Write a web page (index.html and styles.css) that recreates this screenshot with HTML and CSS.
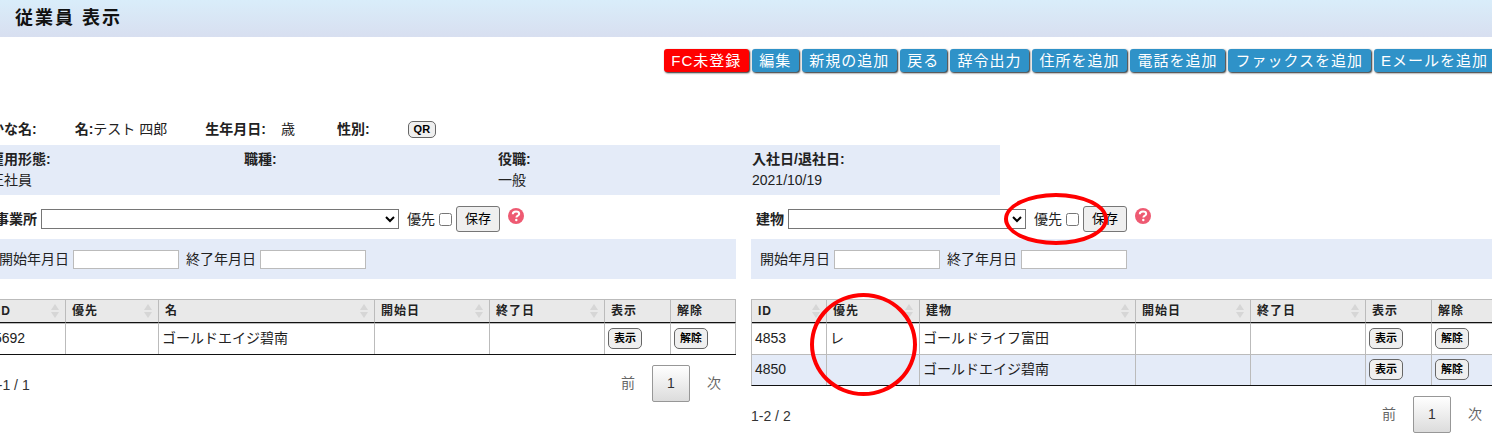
FILE: index.html
```html
<!DOCTYPE html>
<html lang="ja">
<head>
  <meta charset="UTF-8">
  <meta name="viewport" content="width=device-width, initial-scale=1.0">
  <title>従業員 表示</title>
  <link rel="stylesheet" href="styles.css">
</head>
<body>
  <header class="page-title">
    <h1>従業員 表示</h1>
  </header>

  <main class="content">
    <div class="toolbar">
      <button type="button" class="tool alert">FC未登録</button>
      <button type="button" class="tool">編集</button>
      <button type="button" class="tool">新規の追加</button>
      <button type="button" class="tool">戻る</button>
      <button type="button" class="tool">辞令出力</button>
      <button type="button" class="tool">住所を追加</button>
      <button type="button" class="tool">電話を追加</button>
      <button type="button" class="tool">ファックスを追加</button>
      <button type="button" class="tool">Eメールを追加</button>
    </div>

    <div class="person">
      <div><b>かな名:</b></div>
      <div><b>名:</b>テスト 四郎</div>
      <div class="birth"><b>生年月日:</b><span>歳</span></div>
      <div class="sex"><b>性別:</b></div>
      <button type="button" class="small">QR</button>
    </div>

    <div class="job">
      <div><b>雇用形態:</b><br>正社員</div>
      <div><b>職種:</b></div>
      <div><b>役職:</b><br>一般</div>
      <div><b>入社日/退社日:</b><br>2021/10/19</div>
    </div>

    <div class="panels">
      <section class="panel">
        <div class="assign">
          <label for="office"><b>事業所</b></label>
          <select id="office" class="select-office"><option></option></select>
          <label class="priority" for="office-priority">優先</label>
          <input type="checkbox" id="office-priority">
          <button type="button" class="save">保存</button>
          <svg class="help" viewBox="0 0 16 16"><circle cx="8" cy="8" r="8" fill="#ee5a72"/><path d="M4.8 6.2C4.8 4.4 6.2 3.5 8 3.5s3.2.9 3.2 2.4c0 1.7-2.8 1.8-2.8 3.6" fill="none" stroke="#fff" stroke-width="2"/><circle cx="8.3" cy="12" r="1.2" fill="#fff"/></svg>
        </div>
        <div class="dates">
          <label for="office-start">開始年月日</label>
          <input type="text" id="office-start">
          <label class="end" for="office-end">終了年月日</label>
          <input type="text" id="office-end">
        </div>
        <table class="list">
          <colgroup><col class="c-id"><col class="c-pri"><col><col class="c-date"><col class="c-date"><col class="c-btn"><col class="c-last"></colgroup>
          <thead>
            <tr><th class="sort">ID</th><th class="sort">優先</th><th class="sort">名</th><th class="sort">開始日</th><th class="sort">終了日</th><th>表示</th><th>解除</th></tr>
          </thead>
          <tbody>
            <tr><td>5692</td><td></td><td>ゴールドエイジ碧南</td><td></td><td></td><td><button type="button" class="small">表示</button></td><td><button type="button" class="small">解除</button></td></tr>
          </tbody>
        </table>
        <div class="list-footer">
          <div class="count">1-1 / 1</div>
          <div class="pager">
            <button type="button">前</button>
            <button type="button" class="current">1</button>
            <button type="button">次</button>
          </div>
        </div>
      </section>

      <section class="panel">
        <div class="assign">
          <label for="building"><b>建物</b></label>
          <select id="building" class="select-building"><option></option></select>
          <label class="priority" for="building-priority">優先</label>
          <input type="checkbox" id="building-priority">
          <button type="button" class="save">保存</button>
          <svg class="help" viewBox="0 0 16 16"><circle cx="8" cy="8" r="8" fill="#ee5a72"/><path d="M4.8 6.2C4.8 4.4 6.2 3.5 8 3.5s3.2.9 3.2 2.4c0 1.7-2.8 1.8-2.8 3.6" fill="none" stroke="#fff" stroke-width="2"/><circle cx="8.3" cy="12" r="1.2" fill="#fff"/></svg>
        </div>
        <div class="dates">
          <label for="building-start">開始年月日</label>
          <input type="text" id="building-start">
          <label class="end" for="building-end">終了年月日</label>
          <input type="text" id="building-end">
        </div>
        <table class="list">
          <colgroup><col class="c-id"><col class="c-pri"><col><col class="c-date"><col class="c-date"><col class="c-btn"><col class="c-last"></colgroup>
          <thead>
            <tr><th class="sort">ID</th><th class="sort">優先</th><th class="sort">建物</th><th class="sort">開始日</th><th class="sort">終了日</th><th>表示</th><th>解除</th></tr>
          </thead>
          <tbody>
            <tr><td>4853</td><td>レ</td><td>ゴールドライフ富田</td><td></td><td></td><td><button type="button" class="small">表示</button></td><td><button type="button" class="small">解除</button></td></tr>
            <tr><td>4850</td><td></td><td>ゴールドエイジ碧南</td><td></td><td></td><td><button type="button" class="small">表示</button></td><td><button type="button" class="small">解除</button></td></tr>
          </tbody>
        </table>
        <div class="list-footer">
          <div class="count">1-2 / 2</div>
          <div class="pager">
            <button type="button">前</button>
            <button type="button" class="current">1</button>
            <button type="button">次</button>
          </div>
        </div>
        <div class="mark mark-check"></div>
        <div class="mark mark-column"></div>
      </section>
    </div>
  </main>
</body>
</html>
```
FILE: styles.css
```css
:root {
  --blue: #2f92c8;
  --band: #e4ebf8;
  --line: #bbb;
  --text: #222;
}
* { box-sizing: border-box; }
body {
  margin: 0;
  overflow: hidden;
  background: #fff;
  font-family: "Liberation Sans", "Noto Sans CJK JP", sans-serif;
  font-size: 14px;
  line-height: 21px;
  color: var(--text);
}
button, input, select {
  font-family: inherit;
  margin: 0;
}
.page-title {
  padding: 6px 15px 7px;
  background: linear-gradient(#d9edfa, #d8dff0);
}
.page-title h1 {
  margin: 0;
  font-size: 18px;
  line-height: 24px;
  letter-spacing: 2px;
  color: #111;
}
/* the content is a little wider than the window on both sides */
.content {
  margin: 0 -5px 0 -10px;
}
.toolbar {
  display: flex;
  justify-content: flex-end;
  gap: 3px;
  padding: 12px 1px 0 0;
}
.tool {
  height: 23px;
  padding: 0 8px 1px 7px;
  border: 0;
  border-radius: 3px;
  background: var(--blue);
  box-shadow: 1px 1px 2px #222;
  color: #fff;
  font-size: 15px;
  line-height: 21px;
  letter-spacing: 1px;
  white-space: nowrap;
}
.tool.alert {
  background: #f00;
}
.person {
  display: flex;
  align-items: center;
  gap: 38px;
  height: 31px;
  margin-top: 42px;
}
.birth {
  display: flex;
  gap: 15px;
}
.sex {
  margin-left: 4px;
}
.small {
  height: 21px;
  padding: 0 5px;
  border: 1px solid #666;
  border-radius: 5px;
  background: #efefef;
  color: #000;
  font-size: 11px;
  line-height: 18px;
  font-weight: bold;
}
.person .small {
  height: 17px;
  line-height: 15px;
}
.job {
  display: grid;
  grid-template-columns: repeat(3, 254px) 1fr;
  width: 67%;
  height: 50px;
  padding-top: 4px;
  background: var(--band);
}
.panels {
  display: flex;
  gap: 15px;
}
.panel {
  position: relative;
  flex: 1;
  min-width: 0;
}
.assign {
  display: flex;
  align-items: center;
  gap: 4px;
  height: 44px;
  padding: 4px 0 0 5px;
}
.assign select {
  height: 20px;
  border: 1px solid #767676;
  border-radius: 0;
  background: #fff;
}
.select-office { width: 358px; }
.select-building { width: 238px; }
.priority {
  margin-left: 4px;
}
.assign input {
  width: 13px;
  height: 13px;
}
.save {
  height: 26px;
  padding: 0 8px 3px;
  border: 1px solid #767676;
  border-radius: 3px;
  background: #efefef;
  color: #000;
  font-size: 13px;
}
.help {
  width: 16px;
  height: 16px;
  margin: 0 0 6px 4px;
}
.dates {
  display: flex;
  align-items: center;
  gap: 4px;
  height: 40px;
  padding-left: 9px;
  background: var(--band);
}
.dates input {
  width: 106px;
  height: 19px;
  border: 1px solid var(--line);
  background: #fff;
}
.dates .end {
  margin-left: 3px;
}
.list {
  width: 100%;
  margin-top: 20px;
  table-layout: fixed;
  border-collapse: separate;
  border-spacing: 0;
  border-left: 1px solid var(--line);
  border-bottom: 1px solid #111;
}
.c-id { width: 75px; }
.c-pri { width: 93px; }
.c-date { width: 115px; }
.c-btn { width: 66px; }
.c-last { width: 65px; }
.list th, .list td {
  border-right: 1px solid var(--line);
  text-align: left;
}
.list th {
  height: 24px;
  padding: 0 6px;
  border-top: 1px solid var(--line);
  border-bottom: 1px solid #111;
  background: #e9e9e9;
  font-size: 12px;
  line-height: 18px;
  letter-spacing: 1px;
}
.list .sort {
  background: #e9e9e9 url("data:image/svg+xml,%3Csvg xmlns='http://www.w3.org/2000/svg' width='8' height='14'%3E%3Cpath d='M4 0L8 6H0zM4 14L0 8H8z' fill='%23d6d6d6'/%3E%3C/svg%3E") no-repeat right 6px center;
}
.list td {
  height: 31px;
  padding: 0 3px 2px;
  border-top: 1px solid var(--line);
}
.list td .small {
  display: block;
}
.list tbody tr:nth-child(even) {
  background: var(--band);
}
.list-footer {
  display: flex;
  justify-content: space-between;
  padding-top: 10px;
  color: #333;
}
.count {
  padding-top: 10px;
}
.pager {
  display: flex;
  gap: 2px;
}
.pager button {
  height: 37px;
  padding: 0 14px 3px;
  border: 1px solid transparent;
  border-radius: 2px;
  background: none;
  color: #666;
  font-size: 14px;
}
.pager .current {
  width: 38px;
  padding-bottom: 1px;
  border-color: #979797;
  background: linear-gradient(#fff, #dcdcdc);
  color: #333;
}
.mark {
  position: absolute;
  border: 4px solid #f00;
  border-radius: 50%;
}
.mark-check {
  top: -2px;
  left: 253px;
  width: 104px;
  height: 52px;
}
.mark-column {
  top: 98px;
  left: 59px;
  width: 107px;
  height: 103px;
}
```
